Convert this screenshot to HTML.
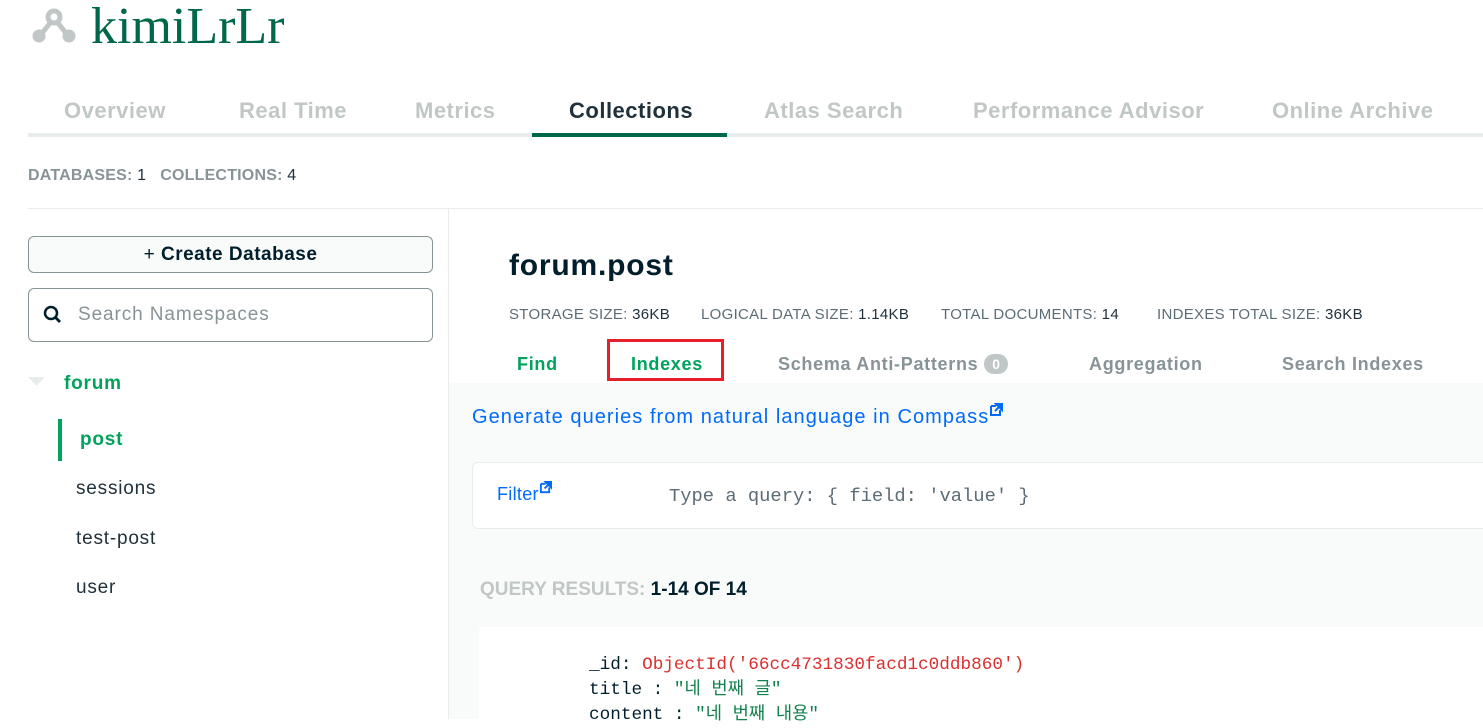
<!DOCTYPE html>
<html><head><meta charset="utf-8"><style>
*{margin:0;padding:0;box-sizing:border-box}
body{width:1483px;height:719px;overflow:hidden;background:#fff;font-family:"Liberation Sans","Noto Sans CJK KR",sans-serif;position:relative}
.a{position:absolute;white-space:nowrap}
.tab{position:absolute;top:98px;font-size:22px;font-weight:bold;color:#c1c7c6;letter-spacing:0.5px}
.st{font-size:15px;color:#5c6c75;top:306px;letter-spacing:0.3px}
.st b{font-weight:normal;color:#21313c}
.sub{position:absolute;top:354px;font-size:18px;font-weight:bold;color:#889397;letter-spacing:0.7px}
.nav{position:absolute;left:76px;font-size:19px;color:#21313c;letter-spacing:0.8px}
.mono{font-family:"Liberation Mono","Noto Sans CJK KR",monospace}
</style></head><body>
<svg class="a" style="left:28px;top:4px" width="50" height="40" viewBox="26 2 50 40">
<g stroke="#c1c7c6" fill="none" stroke-width="5"><circle cx="52" cy="15" r="6"/><path d="M48 21 L37 35 M56 21 L67 35"/></g>
<circle cx="37" cy="34" r="6.5" fill="#c1c7c6"/><circle cx="67" cy="34" r="6.5" fill="#c1c7c6"/></svg>
<div class="a" style="left:91px;top:-3px;font-family:'Liberation Serif',serif;font-size:52px;color:#00684a">kimiLrLr</div>

<div class="a" style="left:28px;top:133px;width:1455px;height:4px;background:#e8edeb"></div>
<div class="a" style="left:532px;top:133px;width:195px;height:4px;background:#00684a"></div>
<div class="tab" style="left:64px">Overview</div>
<div class="tab" style="left:239px">Real Time</div>
<div class="tab" style="left:415px">Metrics</div>
<div class="tab" style="left:569px;color:#21313c">Collections</div>
<div class="tab" style="left:764px">Atlas Search</div>
<div class="tab" style="left:973px">Performance Advisor</div>
<div class="tab" style="left:1272px">Online Archive</div>

<div class="a" style="left:28px;top:167px;font-size:16px;font-weight:bold;color:#889397;letter-spacing:0.2px">DATABASES: <span style="color:#21313c;font-weight:normal">1</span>&nbsp;&nbsp; COLLECTIONS: <span style="color:#21313c;font-weight:normal">4</span></div>
<div class="a" style="left:28px;top:208px;width:1455px;height:1px;background:#e8edeb"></div>
<div class="a" style="left:448px;top:208px;width:1px;height:511px;background:#e8edeb"></div>

<div class="a" style="left:28px;top:236px;width:405px;height:37px;border:1px solid #889397;border-radius:6px;background:#f9fbfa;text-align:center;font-size:19px;font-weight:bold;color:#001e2b;line-height:35px;letter-spacing:0.5px"><span style="font-weight:normal">+</span> Create Database</div>
<div class="a" style="left:28px;top:288px;width:405px;height:54px;border:1px solid #889397;border-radius:6px"></div>
<svg class="a" style="left:43px;top:305px" width="20" height="20" viewBox="0 0 20 20"><circle cx="8" cy="8" r="6" stroke="#001e2b" stroke-width="2.5" fill="none"/><path d="M12.5 12.5 L17 17" stroke="#001e2b" stroke-width="2.8"/></svg>
<div class="a" style="left:78px;top:304px;font-size:19px;color:#889397;letter-spacing:0.9px">Search Namespaces</div>
<svg class="a" style="left:28px;top:377px" width="18" height="10"><path d="M0 0 L17 0 L8.5 9Z" fill="#e8edeb"/></svg>
<div class="nav" style="left:64px;top:373px;font-weight:bold;color:#00a35c">forum</div>
<div class="a" style="left:58px;top:419px;width:4px;height:42px;background:#00a35c"></div>
<div class="nav" style="left:80px;top:429px;font-weight:bold;color:#00a35c">post</div>
<div class="nav" style="top:478px">sessions</div>
<div class="nav" style="top:528px">test-post</div>
<div class="nav" style="top:577px">user</div>

<div class="a" style="left:509px;top:249px;font-size:30px;font-weight:bold;color:#001e2b;letter-spacing:0.8px">forum.post</div>
<div class="a st" style="left:509px">STORAGE SIZE: <b>36KB</b></div>
<div class="a st" style="left:701px">LOGICAL DATA SIZE: <b>1.14KB</b></div>
<div class="a st" style="left:941px">TOTAL DOCUMENTS: <b>14</b></div>
<div class="a st" style="left:1157px">INDEXES TOTAL SIZE: <b>36KB</b></div>
<div class="sub" style="left:517px;color:#00a35c">Find</div>
<div class="sub" style="left:631px;color:#00a35c">Indexes</div>
<div class="a" style="left:607px;top:339px;width:117px;height:42px;border:3px solid #e5202a"></div>
<div class="sub" style="left:778px">Schema Anti-Patterns <span style="display:inline-block;width:24px;height:20px;border-radius:10px;background:#c1c7c6;color:#fff;font-size:14px;text-align:center;line-height:20px;vertical-align:1px;letter-spacing:0">0</span></div>
<div class="sub" style="left:1089px">Aggregation</div>
<div class="sub" style="left:1282px">Search Indexes</div>

<div class="a" style="left:449px;top:383px;width:1034px;height:336px;background:#f9fbfa"></div>
<div class="a" style="left:472px;top:403px;font-size:20px;color:#016bf8;letter-spacing:1.05px">Generate queries from natural language in Compass<svg width="14" height="14" viewBox="0 0 14 14" style="vertical-align:6px"><path d="M2 3h5M2 3v9h9V7" stroke="#016bf8" stroke-width="2" fill="none"/><path d="M7 1h6v6z M12 2L6 8" stroke="#016bf8" stroke-width="2" fill="#016bf8"/></svg></div>
<div class="a" style="left:472px;top:462px;width:1020px;height:67px;background:#fff;border:1px solid #e8edeb;border-radius:6px"></div>
<div class="a" style="left:497px;top:481px;font-size:18px;color:#016bf8;letter-spacing:0.3px">Filter<svg width="13" height="13" viewBox="0 0 14 14" style="vertical-align:6px"><path d="M2 3h5M2 3v9h9V7" stroke="#016bf8" stroke-width="2" fill="none"/><path d="M7 1h6v6z M12 2L6 8" stroke="#016bf8" stroke-width="2" fill="#016bf8"/></svg></div>
<div class="a mono" style="left:669px;top:485px;font-size:18.8px;color:#5c6c75">Type a query: { field: 'value' }</div>

<div class="a" style="left:480px;top:579px;font-size:19px;font-weight:bold;color:#c1c7c6;letter-spacing:0px">QUERY RESULTS: <span style="color:#001e2b">1-14 OF 14</span></div>
<div class="a" style="left:479px;top:627px;width:1004px;height:92px;background:#fff"></div>
<div class="a mono" style="left:589px;top:653px;font-size:17.7px;color:#001e2b;line-height:25px">_id: <span style="color:#db3030">ObjectId('66cc4731830facd1c0ddb860')</span><br>title : <span style="color:#12824d">"네 번째 글"</span><br>content : <span style="color:#12824d">"네 번째 내용"</span></div>
</body></html>
